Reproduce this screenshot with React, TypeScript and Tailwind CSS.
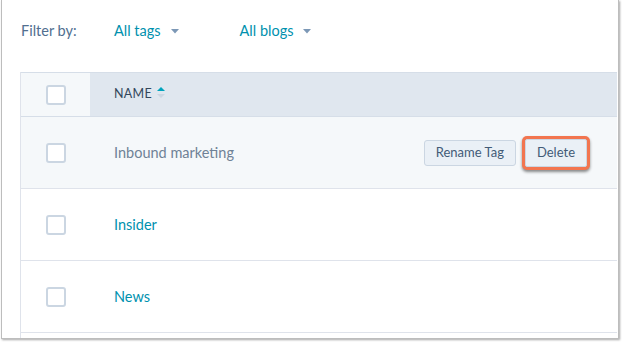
import React from "react";

const Caret = () => (
  <svg width="8" height="5" viewBox="0 0 8 5" className="ml-[10px] mt-[1px]">
    <path d="M0 0 L8 0 L4 4.5 Z" fill="#7c98b6" />
  </svg>
);

const Checkbox = () => (
  <div className="w-[20px] h-[20px] rounded-[3px] border-2 border-[#cbd6e2] bg-white" />
);

const Row = ({ children, hover, text, link }: { children?: React.ReactNode; hover?: boolean; text: string; link?: boolean }) => (
  <div className={`flex items-center h-[72px] border-b border-[#dfe3eb] ${hover ? "bg-[#f5f8fa]" : "bg-white"}`}>
    <div className="w-[69px] flex justify-center">
      <Checkbox />
    </div>
    <div className={`pl-[24px] text-[14.5px] ${link ? "text-[#0091ae]" : "text-[#6f8296]"}`}>{text}</div>
    <div className="flex-1" />
    {children}
  </div>
);

export default function App() {
  return (
    <div className="w-[622px] h-[344px] bg-white overflow-hidden" style={{ fontFamily: "Lato, 'Noto Sans', sans-serif" }}>
      <div className="ml-[1px] w-[618px] h-[339px] border-l border-r border-b border-[#bdbdbd] shadow-[1px_1px_2px_rgba(0,0,0,0.35)] bg-white flex flex-col">
        <div className="flex items-center h-[72px] pl-[19px] pb-[11px] text-[14.5px]">
          <span className="text-[#516f90] w-[93px]">Filter by:</span>
          <span className="text-[#0091ae] flex items-center">All tags<Caret /></span>
          <span className="text-[#0091ae] flex items-center ml-[61px]">All blogs<Caret /></span>
        </div>
        <div className="ml-[18px] mr-[1px] border-l border-[#dfe3eb] flex-1">
          <div className="flex items-center h-[45px] bg-[#e0e7ef] border-t border-b border-[#d6dee8]">
            <div className="w-[69px] h-full bg-[#f5f8fa] flex justify-center items-center">
              <Checkbox />
            </div>
            <div className="pl-[24px] text-[12.5px] text-[#33475b] tracking-[0.3px] flex items-center">
              NAME
              <svg width="10" height="14" viewBox="0 0 10 14" className="ml-[4px] -mt-[3px]">
                <path d="M1 5 L5 1 L9 5 Z" fill="#00a4bd" />
                <path d="M1 8 L9 8 L5 12 Z" fill="#cbd6e2" />
              </svg>
            </div>
          </div>
          <Row hover text="Inbound marketing">
            <div className="flex items-center mr-[27px]">
              <button className="h-[26px] px-[11px] rounded-[3px] border border-[#cbd6e2] bg-[#eaf0f6] text-[13px] text-[#425b76]">Rename Tag</button>
              <div className="ml-[6px] p-[3px] rounded-[5px] bg-[#f2754f] shadow-[0_2px_3px_rgba(0,0,0,0.45)]">
                <button className="h-[28px] px-[11px] rounded-[2px] border border-[#cbd6e2] bg-[#eaf0f6] text-[13px] text-[#425b76]">Delete</button>
              </div>
            </div>
          </Row>
          <Row link text="Insider" />
          <Row link text="News" />
        </div>
      </div>
    </div>
  );
}
